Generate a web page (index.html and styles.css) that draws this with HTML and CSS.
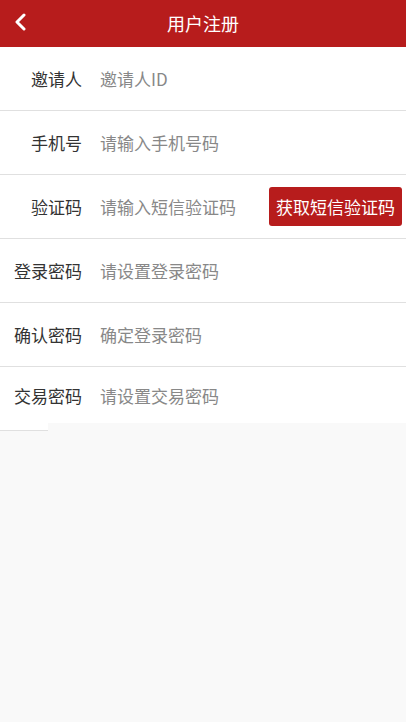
FILE: index.html
```html
<!DOCTYPE html>
<html lang="zh-CN">
<head>
<meta charset="utf-8">
<title>用户注册</title>
<link rel="stylesheet" href="styles.css">
</head>
<body>
<header class="topbar">
  <a class="back" href="#" aria-label="返回">
    <svg width="14" height="18" viewBox="0 0 14 18"><path d="M11 2 L4 9 L11 16" fill="none" stroke="#fff" stroke-width="3" stroke-linecap="round" stroke-linejoin="round"/></svg>
  </a>
  <h1 class="title">用户注册</h1>
</header>
<form class="form">
  <div class="row"><label class="label">邀请人</label><input class="field" placeholder="邀请人ID"></div>
  <div class="row"><label class="label">手机号</label><input class="field" placeholder="请输入手机号码"></div>
  <div class="row"><label class="label">验证码</label><input class="field" placeholder="请输入短信验证码"><button type="button" class="code-btn">获取短信验证码</button></div>
  <div class="row"><label class="label">登录密码</label><input class="field" placeholder="请设置登录密码"></div>
  <div class="row"><label class="label">确认密码</label><input class="field" placeholder="确定登录密码"></div>
  <div class="row row-last"><label class="label">交易密码</label><input class="field" placeholder="请设置交易密码"></div>
</form>
<div class="tail"></div>
</body>
</html>
```
FILE: styles.css
```css
html, body {
  margin: 0;
  padding: 0;
  background: #f9f9f9;
  font-family: "Noto Sans CJK SC", "Noto Sans", sans-serif;
}
.topbar {
  height: 47px;
  background: #b71c1c;
  display: flex;
  align-items: center;
  justify-content: center;
  position: relative;
}
.back {
  position: absolute;
  left: 13px;
  top: 12px;
  display: block;
  width: 14px;
  height: 18px;
}
.title {
  margin: 0;
  color: #fff;
  font-size: 18px;
  font-weight: normal;
  line-height: 1;
  margin-top: -2px;
}
.form {
  background: #fff;
  margin: 0;
}
.row {
  height: 63px;
  border-bottom: 1px solid #e0e0e0;
  display: flex;
  align-items: center;
}
.row-last {
  height: 56px;
  border-bottom: none;
}
.label {
  width: 82px;
  flex: none;
  text-align: right;
  font-size: 17px;
  color: #333;
}
.field {
  flex: 1;
  min-width: 0;
  margin-left: 18px;
  border: none;
  outline: none;
  background: transparent;
  font-family: inherit;
  font-size: 17px;
  color: #333;
  padding: 0;
}
.field::placeholder {
  color: #888;
}
.code-btn {
  flex: none;
  margin-right: 4px;
  height: 39px;
  padding: 0 7px;
  border: none;
  border-radius: 3px;
  background: #b71c1c;
  color: #fff;
  font-family: inherit;
  font-size: 17px;
}
.tail {
  width: 48px;
  height: 7px;
  background: #fff;
  border-bottom: 1px solid #e0e0e0;
}
```
